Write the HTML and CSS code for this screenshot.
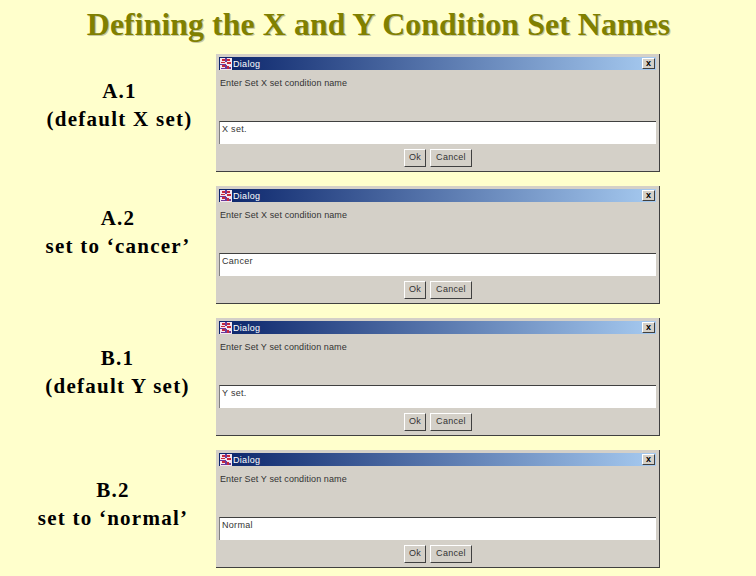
FILE: index.html
```html
<!DOCTYPE html>
<html lang="en">
<head>
    <meta charset="UTF-8">
    <title>Defining the X and Y Condition Set Names</title>
    <link rel="stylesheet" href="styles.css">
</head>
<body>
    <h1>Defining the X and Y Condition Set Names</h1>

    <div class="rows">
        <div class="row">
            <div class="label label-a1">A.1<br>(default X set)</div>
            <div class="dialog">
                <div class="titlebar">
                    <svg class="java-icon" viewBox="0 0 12 12"><rect width="12" height="12" fill="#f4e6ee"/><path d="M2 1h3v2H2zM7 1h3v2H7zM1 4h4v1H1zM7 4h4v2H7zM2 7h3v2H2zM7 8h2v3H7z" fill="#c8283c"/><path d="M5 0h2v4H5zM0 6h6v1H0zM5 7h2v4H5zM1 10h4v1H1zM9 9h2v2H9z" fill="#6a3a9c"/></svg>
                    <span class="title">Dialog</span>
                    <span class="close">x</span>
                </div>
                <div class="prompt">Enter Set X set condition name</div>
                <div class="field">X set.</div>
                <div class="buttons"><span class="btn btn-ok">Ok</span><span class="btn btn-cancel">Cancel</span></div>
            </div>
        </div>

        <div class="row">
            <div class="label label-a2">A.2<br>set to ‘cancer’</div>
            <div class="dialog">
                <div class="titlebar">
                    <svg class="java-icon" viewBox="0 0 12 12"><rect width="12" height="12" fill="#f4e6ee"/><path d="M2 1h3v2H2zM7 1h3v2H7zM1 4h4v1H1zM7 4h4v2H7zM2 7h3v2H2zM7 8h2v3H7z" fill="#c8283c"/><path d="M5 0h2v4H5zM0 6h6v1H0zM5 7h2v4H5zM1 10h4v1H1zM9 9h2v2H9z" fill="#6a3a9c"/></svg>
                    <span class="title">Dialog</span>
                    <span class="close">x</span>
                </div>
                <div class="prompt">Enter Set X set condition name</div>
                <div class="field">Cancer</div>
                <div class="buttons"><span class="btn btn-ok">Ok</span><span class="btn btn-cancel">Cancel</span></div>
            </div>
        </div>

        <div class="row">
            <div class="label label-b1">B.1<br>(default Y set)</div>
            <div class="dialog">
                <div class="titlebar">
                    <svg class="java-icon" viewBox="0 0 12 12"><rect width="12" height="12" fill="#f4e6ee"/><path d="M2 1h3v2H2zM7 1h3v2H7zM1 4h4v1H1zM7 4h4v2H7zM2 7h3v2H2zM7 8h2v3H7z" fill="#c8283c"/><path d="M5 0h2v4H5zM0 6h6v1H0zM5 7h2v4H5zM1 10h4v1H1zM9 9h2v2H9z" fill="#6a3a9c"/></svg>
                    <span class="title">Dialog</span>
                    <span class="close">x</span>
                </div>
                <div class="prompt">Enter Set Y set condition name</div>
                <div class="field">Y set.</div>
                <div class="buttons"><span class="btn btn-ok">Ok</span><span class="btn btn-cancel">Cancel</span></div>
            </div>
        </div>

        <div class="row">
            <div class="label label-b2">B.2<br>set to ‘normal’</div>
            <div class="dialog">
                <div class="titlebar">
                    <svg class="java-icon" viewBox="0 0 12 12"><rect width="12" height="12" fill="#f4e6ee"/><path d="M2 1h3v2H2zM7 1h3v2H7zM1 4h4v1H1zM7 4h4v2H7zM2 7h3v2H2zM7 8h2v3H7z" fill="#c8283c"/><path d="M5 0h2v4H5zM0 6h6v1H0zM5 7h2v4H5zM1 10h4v1H1zM9 9h2v2H9z" fill="#6a3a9c"/></svg>
                    <span class="title">Dialog</span>
                    <span class="close">x</span>
                </div>
                <div class="prompt">Enter Set Y set condition name</div>
                <div class="field">Normal</div>
                <div class="buttons"><span class="btn btn-ok">Ok</span><span class="btn btn-cancel">Cancel</span></div>
            </div>
        </div>
    </div>
</body>
</html>
```

FILE: styles.css
```css
body {
    margin: 0;
    width: 756px;
    height: 576px;
    overflow: hidden;
    background-color: #ffffcc;
    font-family: "Liberation Serif", serif;
}
h1 {
    margin: 0;
    padding-top: 6px;
    padding-left: 1px;
    height: 54px;
    box-sizing: border-box;
    text-align: center;
    font-size: 32px;
    line-height: 36px;
    font-weight: bold;
    color: #808000;
    text-shadow: 1px 1px 0 #c8c8a0;
}
.rows {
    display: flex;
    flex-direction: column;
    gap: 14px;
}
.row {
    display: flex;
    height: 118px;
}
.label {
    box-sizing: border-box;
    width: 216px;
    text-align: center;
    font-size: 21px;
    font-weight: bold;
    line-height: 28px;
    letter-spacing: 1.25px;
    color: #000;
}
.label-a1 { padding: 23px 0 0 23px; }
.label-a2 { padding: 18px 0 0 20px; }
.label-b1 { padding: 26px 0 0 19px; }
.label-b2 { padding: 26px 0 0 10px; }

.dialog {
    box-sizing: border-box;
    width: 444px;
    height: 118px;
    padding: 3px;
    background-color: #d4d0c8;
    border-right: 1px solid #404040;
    border-bottom: 1px solid #404040;
    font-family: "Liberation Sans", sans-serif;
    font-size: 9px;
    color: #333;
}
.titlebar {
    display: flex;
    align-items: center;
    height: 13px;
    padding: 0 0 0 1px;
    background: linear-gradient(to right, #0a246a, #a6caf0);
    color: #fff;
}
.java-icon {
    width: 12px;
    height: 12px;
    margin-right: 1px;
}
.title {
    flex: 1;
    letter-spacing: 0.3px;
}
.close {
    width: 13px;
    height: 11px;
    margin-right: 1px;
    background-color: #d4d0c8;
    border: 1px solid;
    border-color: #fff #404040 #404040 #fff;
    box-sizing: border-box;
    color: #000;
    font-size: 9px;
    font-weight: bold;
    line-height: 8px;
    text-align: center;
}
.prompt {
    height: 51px;
    padding: 8px 0 0 1px;
    box-sizing: border-box;
    letter-spacing: 0.1px;
}
.field {
    box-sizing: border-box;
    height: 23px;
    padding: 2px 0 0 2px;
    background-color: #fff;
    border-top: 1px solid #404040;
    border-left: 1px solid #808080;
    letter-spacing: 0.3px;
}
.buttons {
    display: flex;
    gap: 4px;
    margin-top: 5px;
    padding-left: 185px;
}
.btn {
    box-sizing: border-box;
    height: 18px;
    background-color: #d4d0c8;
    border: 1px solid;
    border-color: #fff #404040 #404040 #fff;
    text-align: center;
    line-height: 15px;
    letter-spacing: 0.3px;
}
.btn-ok { width: 22px; }
.btn-cancel { width: 42px; }
```
